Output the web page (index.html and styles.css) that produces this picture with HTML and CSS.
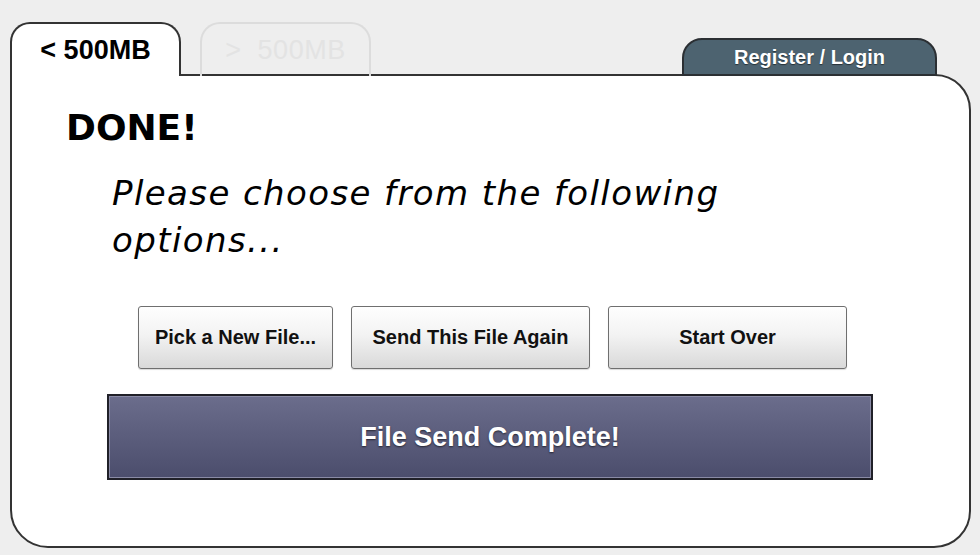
FILE: index.html
```html
<!DOCTYPE html>
<html lang="en">
<head>
    <meta charset="UTF-8">
    <meta name="viewport" content="width=device-width, initial-scale=1.0">
    <title>File Send</title>
    <link rel="stylesheet" href="styles.css">
</head>
<body>
    <div class="tabs">
        <div class="tab tab-active">&lt; 500MB</div>
        <div class="tab tab-off">&gt;&nbsp; 500MB</div>
        <div class="tab-login">Register / Login</div>
    </div>
    <div class="panel">
        <h1>DONE!</h1>
        <p class="prompt">Please choose from the following options...</p>
        <div class="options">
            <button class="opt opt-pick">Pick a New File...</button>
            <button class="opt">Send This File Again</button>
            <button class="opt">Start Over</button>
        </div>
        <div class="status">File Send Complete!</div>
    </div>
</body>
</html>
```

FILE: styles.css
```css
body {
    margin: 0;
    padding: 24px 9px 0 10px;
    background-color: #eeeeee;
    font-family: "Liberation Sans", Arial, sans-serif;
}
.tabs {
    display: flex;
    align-items: flex-end;
    height: 52px;
    margin-bottom: -2px;
}
.tab {
    box-sizing: border-box;
    width: 171px;
    height: 54px;
    border-radius: 20px 20px 0 0;
    font-size: 27px;
    text-align: center;
    padding-top: 11px;
}
.tab-active {
    position: relative;
    z-index: 1;
    background-color: #fff;
    border: 2px solid #333;
    border-bottom: none;
    font-weight: bold;
    color: #000;
}
.tab-off {
    margin-left: 19px;
    border: 2px solid #dcdcdc;
    border-bottom: none;
    color: #e3e3e3;
    letter-spacing: 0.5px;
}
.tab-login {
    box-sizing: border-box;
    width: 255px;
    height: 38px;
    margin-left: auto;
    margin-right: 34px;
    padding-top: 6px;
    background-color: #4d6370;
    border: 2px solid #2b2f33;
    border-radius: 20px 20px 0 0;
    color: #fff;
    font-size: 20px;
    font-weight: bold;
    text-align: center;
    text-shadow: 0 1px 1px rgba(0, 0, 0, 0.5);
}
.panel {
    box-sizing: border-box;
    height: 474px;
    background-color: #fff;
    border: 2px solid #333;
    border-radius: 0 36px 37px 38px;
    padding: 30px 0 0 54px;
}
h1 {
    margin: 0;
    font-family: "DejaVu Sans", Verdana, sans-serif;
    font-size: 36px;
    line-height: 44px;
}
.prompt {
    margin: 20px 0 0 46px;
    max-width: 680px;
    font-family: "DejaVu Sans", Verdana, sans-serif;
    font-style: italic;
    font-size: 34px;
    letter-spacing: 1.4px;
    line-height: 47px;
}
.options {
    display: flex;
    gap: 18px;
    margin: 42px 0 0 72px;
}
.opt {
    width: 239px;
    height: 63px;
    border: 1px solid #6f6f6f;
    border-radius: 3px;
    background: linear-gradient(#fefefe, #f3f3f3 45%, #d9d9d9);
    font-family: "Liberation Sans", Arial, sans-serif;
    font-size: 20px;
    font-weight: bold;
    color: #111;
    box-shadow: 0 1px 1px rgba(0, 0, 0, 0.15);
}
.opt-pick {
    width: 195px;
}
.status {
    box-sizing: border-box;
    width: 766px;
    height: 86px;
    margin: 25px 0 0 41px;
    border: 2px solid #202028;
    box-shadow: inset 0 0 0 1px #8a8ba6;
    background: linear-gradient(#6b6d8c, #4b4d6c);
    color: #fff;
    font-size: 27px;
    font-weight: bold;
    display: flex;
    align-items: center;
    justify-content: center;
    text-shadow: 0 1px 2px rgba(0, 0, 0, 0.6);
}
```
